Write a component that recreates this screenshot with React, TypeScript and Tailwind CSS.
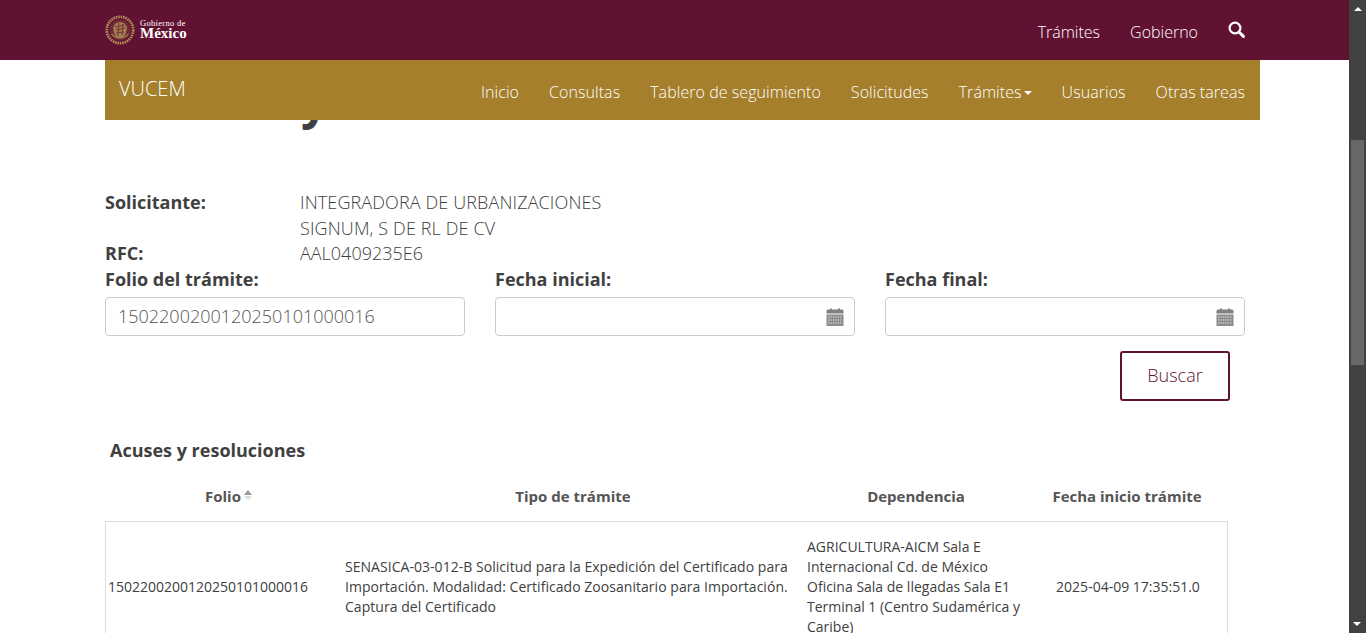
const navItems = ["Inicio", "Consultas", "Tablero de seguimiento", "Solicitudes"];

const folio = "15022002001202501" + "01000016";

const CalendarIcon = () => (
  <svg width="18" height="18" viewBox="0 0 18 18" className="shrink-0">
    <path d="M0.5 3 Q0.5 1.5 2 1.5 H4 V0.5 H6 V1.5 H12 V0.5 H14 V1.5 H16 Q17.5 1.5 17.5 3 V5.5 H0.5 Z" fill="#808080" />
    <rect x="0.5" y="6.5" width="17" height="11.5" fill="#8c8c8c" />
    <path d="M2 9H16M2 12H16M2 15H16" stroke="#e4e4e4" strokeWidth="1.2" strokeDasharray="1.4 1" />
  </svg>
);

const SearchIcon = () => (
  <svg width="17" height="17" viewBox="0 0 17 17" className="mb-[6px]">
    <circle cx="7" cy="7" r="5.4" fill="none" stroke="white" strokeWidth="2.2" />
    <path d="M11 11 L15.4 15.4" stroke="white" strokeWidth="3" strokeLinecap="round" />
  </svg>
);

const Logo = () => (
  <div className="flex items-center gap-[5px]">
    <svg width="30" height="30" viewBox="0 0 30 30">
      <circle cx="15" cy="15" r="13.2" fill="none" stroke="#b08a5a" strokeWidth="2.8" strokeDasharray="1.6 0.8" />
      <circle cx="15" cy="15" r="10.5" fill="#6d2c33" />
      <path d="M8 13 Q10 7 15 7 Q20 7 22 13 Q21 19 19 21 Q15 24 11 21 Q9 19 8 13 Z" fill="#a67c52" />
      <path d="M10 12 L19 10 M11 15 L20 13 M11 18 L19 17 M14 8 L13 21 M18 9 L17 20" stroke="#6d2c33" strokeWidth="0.9" />
      <path d="M6.5 19 Q15 27 23.5 19" fill="none" stroke="#a67c52" strokeWidth="1.4" />
    </svg>
    <div className="flex flex-col font-['Liberation_Serif',serif] leading-none text-white">
      <span className="text-[8.5px] tracking-[0.3px]">Gobierno de</span>
      <span className="mt-[-1px] text-[15px] font-bold">México</span>
    </div>
  </div>
);

function FieldBox({ label, value, icon }: { label: string; value?: string; icon?: boolean }) {
  return (
    <div className="w-[360px]">
      <label className="block h-[30px] text-[18px] font-bold leading-[24px] text-[#404041]">{label}</label>
      <div className="flex h-[39px] items-center justify-between rounded-[4px] border border-[#ccc] bg-white pl-[12px] pr-[10px] text-[18px] font-light text-[#555]">
        <span>{value}</span>
        {icon && <CalendarIcon />}
      </div>
    </div>
  );
}

export default function App() {
  return (
    <div className="flex h-[633px] w-[1366px] overflow-hidden bg-white font-['Open_Sans',sans-serif] text-[#404041]">
      <div className="w-[1349px] shrink-0">
        <header className="h-[60px] bg-[#611232]">
          <div className="flex h-full items-center justify-between pl-[105px] pr-[89px]">
            <Logo />
            <div className="flex items-center gap-[30px] pr-[15px] pt-[4px] text-[16px] font-light text-white">
              <span>Trámites</span>
              <span>Gobierno</span>
              <SearchIcon />
            </div>
          </div>
        </header>

        <div className="pl-[105px] pr-[89px]">
          <nav className="flex h-[60px] bg-[#a57f2c] pl-[14px] pr-[15px] text-white">
            <span className="pt-[15px] text-[20px] font-light leading-[27px]">VUCEM</span>
            <div className="ml-auto flex items-center gap-[30px] pt-[4px] text-[16px] font-light tracking-[0.06px] text-white">
              {navItems.map((item) => (
                <span key={item}>{item}</span>
              ))}
              <span className="flex items-center">
                Trámites
                <span className="ml-[2px] mt-[2px] border-x-[4px] border-t-[4px] border-x-transparent border-t-white" />
              </span>
              <span>Usuarios</span>
              <span>Otras tareas</span>
            </div>
          </nav>

          {/* Heading that scrolled under the nav: only its descender shows */}
          <div className="h-[70px]">
            <div className="h-[10px] overflow-hidden pl-[196px]">
              <div className="mt-[-44px] text-[48px] font-bold leading-[48px] text-[#404041]">y</div>
            </div>
          </div>

          <div className="grid grid-cols-[195px_1fr] text-[18px] leading-[25.7px]">
            <span className="font-bold">Solicitante:</span>
            <span className="w-[320px] font-light tracking-[0.12px]">INTEGRADORA DE URBANIZACIONES SIGNUM, S DE RL DE CV</span>
            <span className="font-bold">RFC:</span>
            <span className="font-light">AAL0409235E6</span>
          </div>

          <div className="flex gap-[30px]">
            <FieldBox label="Folio del trámite:" value={folio} />
            <FieldBox label="Fecha inicial:" icon />
            <FieldBox label="Fecha final:" icon />
          </div>

          <div className="mt-[15px] flex justify-end pr-[30px]">
            <button className="h-[50px] w-[110px] rounded-[3px] border-2 border-[#611232] pb-[2px] text-[18px] font-light text-[#611232]">
              Buscar
            </button>
          </div>

          <h3 className="mt-[36px] pl-[5px] text-[18px] font-bold leading-[27px]">Acuses y resoluciones</h3>

          <div className="mt-[22px] w-[1123px] text-[14px]">
            <div className="grid h-[35px] grid-cols-[240px_456px_230px_192px] items-start text-center text-[15px] font-bold leading-[20px] text-[#555]">
              <span className="flex items-center justify-center gap-[3px] pl-[7px]">
                Folio
                <span className="mb-[3px] flex flex-col gap-[1px]">
                  <span className="border-x-[4px] border-b-[5px] border-x-transparent border-b-[#999]" />
                  <span className="border-x-[4px] border-t-[4px] border-x-transparent border-t-[#ddd]" />
                </span>
              </span>
              <span>Tipo de trámite</span>
              <span>Dependencia</span>
              <span>Fecha inicio trámite</span>
            </div>
            <div className="grid h-[140px] grid-cols-[239px_462px_221px_198px] items-center border border-[#ddd] pb-[8px] leading-[20px]">
              <span className="pl-[2px]">{folio}</span>
              <span className="tracking-[0.04px]">
                SENASICA-03-012-B Solicitud para la Expedición del Certificado para Importación. Modalidad: Certificado Zoosanitario para Importación. Captura del Certificado
              </span>
              <span>
                AGRICULTURA-AICM Sala E Internacional Cd. de México Oficina Sala de llegadas Sala E1 Terminal 1 (Centro Sudamérica y Caribe)
              </span>
              <span className="pl-[2px] text-center">2025-04-09 17:35:51.0</span>
            </div>
          </div>
        </div>
      </div>

      <div className="relative flex w-[17px] shrink-0 flex-col bg-[#424242]">
        <span className="mx-auto mt-[7px] border-x-[4px] border-b-[4px] border-x-transparent border-b-white" />
        <div className="mx-[2px] mt-[129px] h-[225px] bg-[#686868]" />
        <span className="absolute bottom-[7px] left-[4px] border-x-[4px] border-t-[4px] border-x-transparent border-t-white" />
      </div>
    </div>
  );
}
